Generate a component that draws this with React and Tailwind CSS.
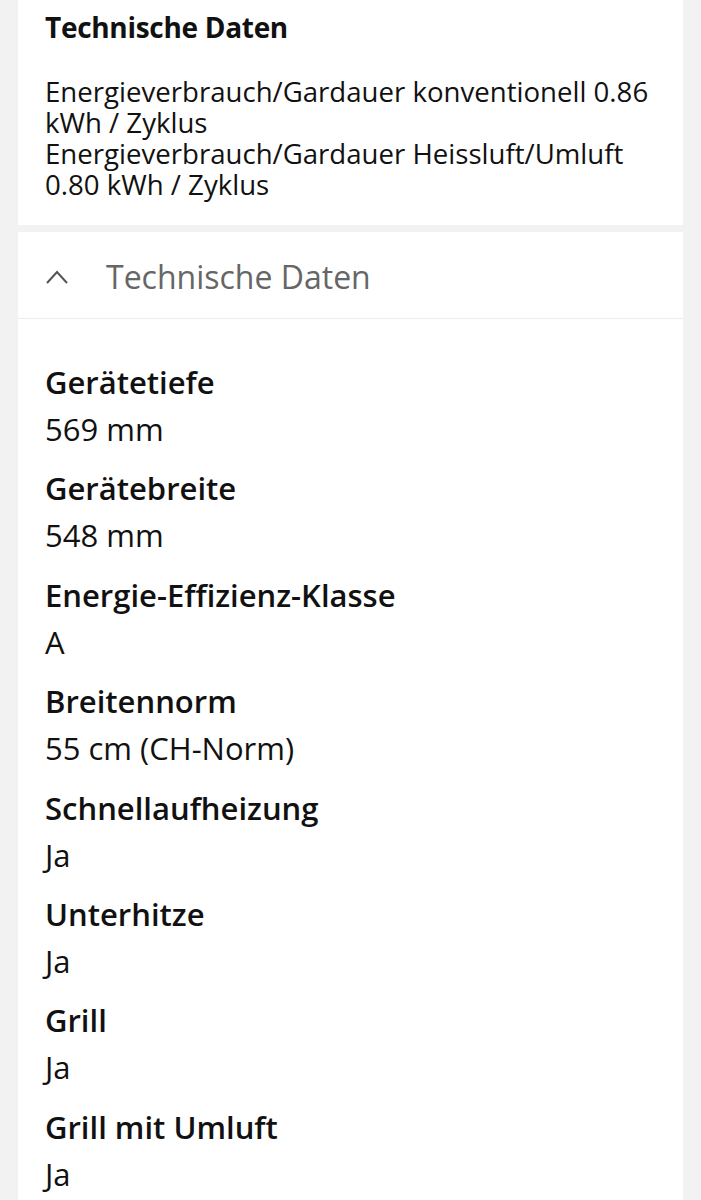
export default function App() {
  const items = [
    ["Gerätetiefe", "569 mm"],
    ["Gerätebreite", "548 mm"],
    ["Energie-Effizienz-Klasse", "A"],
    ["Breitennorm", "55 cm (CH-Norm)"],
    ["Schnellaufheizung", "Ja"],
    ["Unterhitze", "Ja"],
    ["Grill", "Ja"],
    ["Grill mit Umluft", "Ja"],
  ];
  return (
    <div className="min-h-[1200px] bg-[#f2f2f2] px-[18px] text-[#111]" style={{ fontFamily: '"Open Sans", sans-serif' }}>
      <div className="bg-white px-[27px] pt-[10px] pb-[25px]">
        <div className="text-[28px] leading-[34px] font-bold tracking-[-0.3px]">Technische Daten</div>
        <div className="mt-[32px] text-[27.6px] leading-[31px]">
          <div>Energieverbrauch/Gardauer konventionell 0.86 kWh / Zyklus</div>
          <div>Energieverbrauch/Gardauer Heissluft/Umluft 0.80 kWh / Zyklus</div>
        </div>
      </div>
      <div className="mt-[7px] bg-white">
        <div className="flex h-[87px] items-center border-b border-[#ececec] px-[27px] pt-[4px]">
          <svg width="24" height="16" viewBox="0 0 24 16" className="mr-[37px]">
            <path d="M2 14 L12 3 L22 14" fill="none" stroke="#555" strokeWidth="2" />
          </svg>
          <span className="text-[32px] font-medium text-[#666]">Technische Daten</span>
        </div>
        <div className="px-[27px] pt-[40px] pb-[20px]">
          {items.map(([l, v]) => (
            <div key={l} className="mb-[12.4px]">
              <div className="text-[31px] leading-[47px] font-semibold">{l}</div>
              <div className="text-[31px] leading-[47px]">{v}</div>
            </div>
          ))}
        </div>
      </div>
    </div>
  );
}
